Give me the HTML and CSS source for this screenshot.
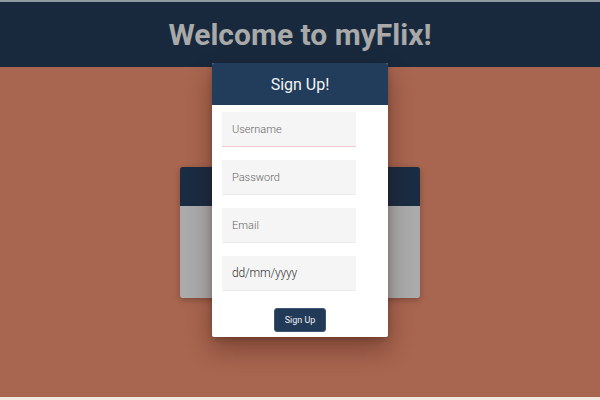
FILE: index.html
```html
<!DOCTYPE html>
<html>
<head>
<meta charset="utf-8">
<link rel="stylesheet" href="styles.css">
</head>
<body>
<div class="page">
  <header class="topbar">
    <h1 class="title">Welcome to myFlix!</h1>
  </header>
  <main class="main">
    <div class="card">
      <div class="card-head"></div>
      <div class="card-body"></div>
    </div>
  </main>
  <div class="modal">
    <div class="modal-head">Sign Up!</div>
    <form class="modal-body">
      <input class="field field-active" type="text" placeholder="Username">
      <input class="field" type="password" placeholder="Password">
      <input class="field" type="text" placeholder="Email">
      <input class="field field-date" type="text" placeholder="dd/mm/yyyy">
      <div class="actions"><button type="button" class="btn">Sign Up</button></div>
    </form>
  </div>
</div>
</body>
</html>
```
FILE: styles.css
```css
html, body {
  margin: 0;
  padding: 0;
  background: #f2e9e3;
  font-family: Roboto, "Liberation Sans", sans-serif;
}
.page {
  position: relative;
  height: 397px;
  background: #a8654f;
  border-top: 2px solid #8f9aa3;
  box-sizing: border-box;
  overflow: hidden;
}
.topbar {
  height: 65px;
  background: #18293d;
  display: flex;
  align-items: center;
  justify-content: center;
}
.title {
  margin: 0;
  margin-top: -1px;
  color: #a9a9a9;
  font-size: 30px;
  font-weight: 700;
  letter-spacing: 0;
}
.main {
  display: flex;
  justify-content: center;
  padding-top: 100px;
}
.card {
  width: 240px;
  border-radius: 3px;
  overflow: hidden;
  box-shadow: 0 2px 6px rgba(0,0,0,0.25);
}
.card-head {
  height: 39px;
  background: #1a2c42;
}
.card-body {
  height: 92px;
  background: #ababab;
}
.modal {
  position: absolute;
  left: 212px;
  top: 61px;
  width: 176px;
  background: #fff;
  border-radius: 2px;
  box-shadow: 0 12px 24px rgba(40,10,0,0.35), 0 2px 6px rgba(0,0,0,0.2);
}
.modal-head {
  height: 42px;
  background: #223c5b;
  color: #f4f4f4;
  font-size: 16px;
  display: flex;
  align-items: center;
  justify-content: center;
  border-radius: 2px 2px 0 0;
}
.modal-body {
  margin: 0;
  padding: 7px 10px 5px 10px;
  display: flex;
  flex-direction: column;
  gap: 13px;
}
.field {
  width: 134px;
  height: 35px;
  box-sizing: border-box;
  border: none;
  border-bottom: 1px solid #ececec;
  background: #f5f5f5;
  padding: 0 10px;
  font-family: Roboto, "Liberation Sans", sans-serif;
  font-size: 11px;
  font-weight: 300;
  color: #333;
  outline: none;
}
.field::placeholder {
  color: #666;
}
.field-active {
  border-bottom: 1px solid #f2c9cf;
}
.field-date {
  font-size: 12px;
}
.field-date::placeholder {
  color: #333;
  letter-spacing: -0.2px;
}
.actions {
  display: flex;
  justify-content: center;
  padding-top: 4px;
}
.btn {
  width: 52px;
  height: 24px;
  background: #213a58;
  color: #f0f0f0;
  border: 1px solid #3d5573;
  border-radius: 3px;
  font-family: Roboto, "Liberation Sans", sans-serif;
  font-size: 9px;
  padding: 0;
}
```
